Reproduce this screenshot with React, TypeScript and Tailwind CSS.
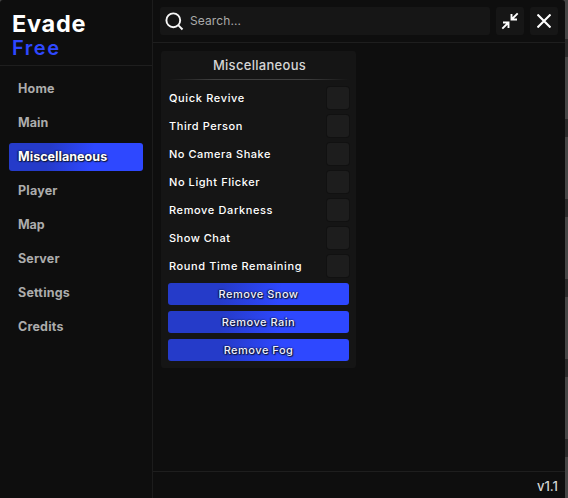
import React from "react";

const nav: [string, string][] = [
  ["Home", "tracking-[0.2px]"],
  ["Main", "tracking-[0.1px]"],
  ["Miscellaneous", "tracking-[0.05px]"],
  ["Player", "tracking-[0.2px]"],
  ["Map", "tracking-[-0.1px]"],
  ["Server", "tracking-[0.15px]"],
  ["Settings", "tracking-[0.2px]"],
  ["Credits", "tracking-[0.2px]"],
];

const toggles: [string, string][] = [
  ["Quick Revive", "tracking-[0.65px]"],
  ["Third Person", "tracking-[0.55px]"],
  ["No Camera Shake", "tracking-[0.52px]"],
  ["No Light Flicker", "tracking-[0.57px]"],
  ["Remove Darkness", "tracking-[0.62px]"],
  ["Show Chat", "tracking-[0.5px]"],
  ["Round Time Remaining", "tracking-[0.62px]"],
];

const actions = ["Remove Snow", "Remove Rain", "Remove Fog"];

const gradient = "bg-[linear-gradient(100deg,#253bc9_0%,#253bc9_30%,#2e48ff_62%,#2e48ff_100%)]";
const outline = "[text-shadow:0_0_2px_#101838,1px_1px_1px_#101838,-1px_0_1px_#101838]";

function Sidebar() {
  return (
    <aside className="flex w-[153px] flex-col border-r border-[#1c1c1c]">
      <header className="h-[66px] border-b border-[#1e1e1e] pt-3 pl-3">
        <h1 className="text-[23.5px] leading-[24px] font-bold tracking-[0.7px] text-white">Evade</h1>
        <h2 className="text-[20px] leading-[24px] font-semibold tracking-[1.5px] text-[#2e48ff]">Free</h2>
      </header>
      <nav className="flex flex-col gap-1.5 pt-[9px] pl-[9px]">
        {nav.map(([name, tracking]) => (
          <a
            key={name}
            className={`flex h-7 w-[134px] items-center rounded-[3px] pl-[9px] text-[12.5px] font-bold ${tracking} ${
              name === "Miscellaneous" ? `${gradient} ${outline} text-white` : "text-[#acacac]"
            }`}
          >
            {name}
          </a>
        ))}
      </nav>
    </aside>
  );
}

function TopBar() {
  return (
    <div className="flex h-[43px] gap-1.5 border-b border-[#1e1e1e] pt-[7px] pl-[7px]">
      <div className="flex h-7 w-[330px] items-center rounded-[3px] bg-[#161616]">
        <svg className="ml-[5px]" width="19" height="19" viewBox="0 0 19 19" fill="none" stroke="#f8f8f8" strokeWidth="1.9">
          <circle cx="8.3" cy="8.3" r="6.9" />
          <path d="M13.2 13.2L17.5 17.5" />
        </svg>
        <span className="ml-1.5 text-[12px] tracking-[0.1px] text-[#aaaaaa]">Search...</span>
      </div>
      <button className="flex size-7 items-center justify-center rounded-[3px] bg-[#161616]">
        <svg width="18" height="18" viewBox="0 0 18 18" fill="none" stroke="#fff" strokeWidth="1.9">
          <path d="M16.7 1.3L10.5 7.5M10.5 2V7.5H16M1.3 16.7L7.5 10.5M2 10.5H7.5V16" />
        </svg>
      </button>
      <button className="flex size-7 items-center justify-center rounded-[3px] bg-[#161616]">
        <svg width="14" height="14" viewBox="0 0 14 14" fill="none" stroke="#fff" strokeWidth="2.1">
          <path d="M.5 .5L13.5 13.5M13.5 .5L.5 13.5" />
        </svg>
      </button>
    </div>
  );
}

function Panel() {
  return (
    <section className="flex h-[317px] w-[195px] flex-col rounded-[3px] bg-[#151515] px-[7px]">
      <h3 className="h-7 pl-0.5 text-center text-[13px] leading-[28px] font-medium tracking-[0.3px] text-[#d5d5d5]">
        Miscellaneous
      </h3>
      <div className="h-px bg-[linear-gradient(to_right,transparent,#404040_25%,#404040_75%,transparent)]" />
      <div className="mt-[7px] flex flex-col gap-1.5">
        {toggles.map(([label, tracking]) => (
          <div key={label} className="flex h-[22px] items-center justify-between">
            <span className={`pl-px text-[11px] font-medium whitespace-nowrap text-white ${tracking}`}>{label}</span>
            <span className="size-[22px] rounded-[3px] bg-[#1d1d1d] ring-1 ring-[#111111]" />
          </div>
        ))}
        {actions.map((label) => (
          <button
            key={label}
            className={`flex h-[22px] items-center justify-center rounded-[3px] text-[11px] font-medium tracking-[0.5px] text-[#eef0ff] ${gradient} ${outline}`}
          >
            {label}
          </button>
        ))}
      </div>
    </section>
  );
}

export default function App() {
  return (
    <div className="flex h-[498px] w-[568px] overflow-hidden bg-[#484848] font-['Inter','Liberation_Sans',sans-serif]">
      <div className="flex w-[565px] rounded-t-[3px] bg-[#0e0e0e]">
        <Sidebar />
        <main className="flex flex-1 flex-col">
          <TopBar />
          <div className="flex-1 pt-2 pl-2">
            <Panel />
          </div>
          <footer className="h-[27px] border-t border-[#1e1e1e] pr-[7px] text-right text-[13px] leading-[29px] font-medium text-[#d5d5d5]">
            v1.1
          </footer>
        </main>
      </div>
      <div className="w-[3px] bg-[repeating-linear-gradient(to_bottom,#464646_0px,#464646_39px,#2b2b2b_39px,#2b2b2b_57px,#464646_57px,#464646_80px)]" />
    </div>
  );
}
